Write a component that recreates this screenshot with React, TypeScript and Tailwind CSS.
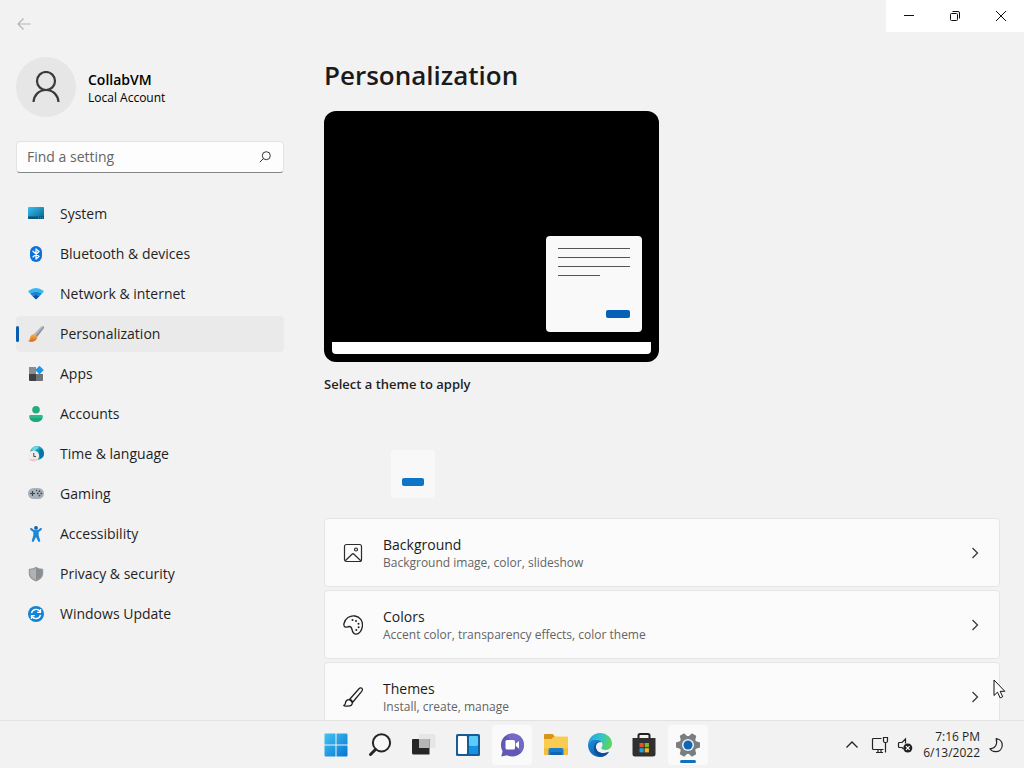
import React from 'react';

const SystemIcon = () => (
  <svg viewBox="0 0 16 16" className="size-4">
    <defs>
      <linearGradient id="sys" x1="0" y1="0" x2="1" y2="1">
        <stop offset="0" stopColor="#35c1f1" />
        <stop offset="1" stopColor="#0a5f8c" />
      </linearGradient>
    </defs>
    <rect y="1" width="16" height="12" rx="1" fill="url(#sys)" />
    <path d="M0 10.500h16V12a1 1 0 0 1-1 1H1a1 1 0 0 1-1-1z" fill="#0b5276" />
    <path d="M10 11.800h1m1 0h1m1 0h1" stroke="#35c1f1" strokeWidth="0.8" />
  </svg>
);

const BluetoothIcon = () => (
  <svg viewBox="0 0 16 16" className="size-4">
    <rect x="2" width="12" height="16" rx="6" fill="#0b72dc" />
    <path d="M5 5.200l6 5.400L8 13V3l3 2.500-6 5.400" fill="none" stroke="#fff" strokeWidth="1.300" strokeLinejoin="round" strokeLinecap="round" />
  </svg>
);

const NetworkIcon = () => (
  <svg viewBox="0 0 16 16" className="size-4">
    <path d="M.6 4.700Q8 -.8 15.400 4.700q.6.6.1 1.200L14 7.500Q8 4 2 7.500L.5 5.900Q0 5.300 .6 4.700z" fill="#35b8f0" />
    <path d="M2 7.500Q8 4 14 7.500l-2.400 2.500Q8 7.800 4.400 10z" fill="#1683d8" />
    <path d="M4.400 10Q8 7.800 11.600 10L8.600 13q-.6.5-1.200 0z" fill="#0a4fa8" />
  </svg>
);

const BrushIcon = () => (
  <svg viewBox="0 0 16 16" className="size-4">
    <defs>
      <linearGradient id="tip" x1="0" y1="0" x2="0" y2="1">
        <stop offset="0" stopColor="#f7b552" />
        <stop offset="1" stopColor="#d9651c" />
      </linearGradient>
    </defs>
    <path d="M15.600.4c.6.6.5 1.400 0 2.200L9.200 11 6 8.200 13.500.8c.7-.6 1.500-.9 2.100-.4z" fill="#8c919b" />
    <path d="M13.500.8c.7-.6 1.500-.9 2.100-.4L7.500 9.500 6 8.200z" fill="#b4b9c4" />
    <path d="M6 8l3.300 3c-.3 3-2.800 4.800-6 4.800-1.200 0-2.400-.2-3.100-.8 1.900-.8 1.500-2 2-3.700C2.700 9.300 4.200 8 6 8z" fill="url(#tip)" />
  </svg>
);

const AppsIcon = () => (
  <svg viewBox="0 0 16 16" className="size-4">
    <path d="M1 1h7v7H1z" fill="#8a8d8f" />
    <path d="M1 8h7v7H2a1 1 0 0 1-1-1z" fill="#3e4245" />
    <path d="M8 8h7v6a1 1 0 0 1-1 1H8z" fill="#6f7376" />
    <path d="M11.500-.2l4.300 4.300-4.300 4.300-4.300-4.300z" fill="#2196e3" />
  </svg>
);

const AccountsIcon = () => (
  <svg viewBox="0 0 16 16" className="size-4">
    <circle cx="8" cy="3.800" r="3.800" fill="#23ad7c" />
    <path d="M2.500 9h11c.8 0 1.300.6 1.300 1.300C14.800 14 11.500 16 8 16s-6.800-2-6.800-5.700C1.200 9.600 1.700 9 2.500 9z" fill="#2dba86" />
    <path d="M1.500 12C2.500 14.800 5 16 8 16s5.500-1.200 6.500-4z" fill="#20a583" />
  </svg>
);

const TimeIcon = () => (
  <svg viewBox="0 0 16 16" className="size-4">
    <circle cx="9" cy="7" r="7" fill="#149dbb" />
    <path d="M6 .8C8.500 0 10 .3 11 1.500 10 3 8 3 7 5L3 4z" fill="#75d5de" />
    <path d="M11 4l3-1c2 2.500 2.500 5 1 8l-3 2z" fill="#0874a4" />
    <circle cx="5.600" cy="9.900" r="5.500" fill="#f2eced" />
    <path d="M1 13a5.500 5.500 0 0 0 9.200 0z" fill="#efc8c9" />
    <path d="M5.800 7v3.600H8" fill="none" stroke="#404650" strokeWidth="1" />
  </svg>
);

const GamingIcon = () => (
  <svg viewBox="0 0 16 16" className="size-4">
    <rect y="2" width="16" height="11" rx="5.500" fill="#a9b2bb" />
    <path d="M4.500 5v5M2 7.500h5" stroke="#3e464f" strokeWidth="1.200" />
    <g fill="#3e464f">
      <circle cx="8.500" cy="4.500" r=".7" />
      <circle cx="11.500" cy="5.200" r=".9" />
      <circle cx="9.800" cy="7.400" r=".9" />
      <circle cx="13.300" cy="7.400" r=".9" />
      <circle cx="11.500" cy="9.600" r=".9" />
    </g>
  </svg>
);

const AccessibilityIcon = () => (
  <svg viewBox="0 0 16 16" className="size-4">
    <circle cx="8" cy="1.900" r="1.900" fill="#1261a6" />
    <path d="M2.200 2.500c.4-.7 1.200-.6 1.700-.2C5 3.500 6.400 4.200 8 4.200s3-.7 4.100-1.900c.5-.4 1.300-.5 1.700.2.300.6 0 1.100-.4 1.500L10.700 6v3.400l1.500 5.200c.2 1.300-1.500 1.900-2.100.6L8 11l-2.100 4.200c-.6 1.300-2.300.7-2.100-.6l1.500-5.200V6L2.600 4c-.4-.4-.7-.9-.4-1.500z" fill="#1c86d8" />
  </svg>
);

const ShieldIcon = () => (
  <svg viewBox="0 0 16 16" className="size-4">
    <path d="M8 .8c1.800 1.300 4 2 6.500 2 .4 0 .7.300.7.700V7.500c0 3.500-2.600 6.300-7.200 7.900C3.400 13.800.8 11 .8 7.500V3.500c0-.4.3-.7.700-.7C4 2.800 6.200 2.100 8 .8z" fill="#96999b" />
    <path d="M8 2.200c1.700 1 3.600 1.600 5.900 1.700v3.600C13.900 10.300 12 12.500 8 14z" fill="#898d8f" />
    <path d="M8 2.200C6.300 3.200 4.400 3.800 2.100 3.900v3.600c0 2.800 1.900 5 5.900 6.500z" fill="#b0b3b5" />
  </svg>
);

const UpdateIcon = () => (
  <svg viewBox="0 0 16 16" className="size-4">
    <circle cx="8" cy="8" r="8" fill="#1583d4" />
    <path d="M3.500 7.200A4.700 4.700 0 0 1 12 5.500M12.500 8.800A4.700 4.700 0 0 1 4 10.500" fill="none" stroke="#fff" strokeWidth="1.400" />
    <path d="M12.500 3v3.300H9.200M3.500 13V9.700h3.300" fill="none" stroke="#fff" strokeWidth="1.300" />
  </svg>
);

const PictureIcon = () => (
  <svg viewBox="0 0 20 20" className="size-5" fill="none" stroke="#2b2b2b" strokeWidth="1.200">
    <rect x="1.500" y="1.500" width="17" height="17" rx="2" />
    <path d="M2.200 17.800L9 11.200q1-.9 2 0l6.800 6.600" />
    <circle cx="13" cy="6.500" r="1.500" />
  </svg>
);

const PaletteIcon = () => (
  <svg viewBox="0 0 20 20" className="size-5">
    <path d="M1 8.500C2 3.500 7 .2 12 1c5 .9 8 5 7.400 10-.5 4.800-3.400 8.300-6.400 8.200-2.500-.1-3.500-2.200-4-4.700-.4-2-1.100-3.200-3-3-1.500.3-2.600 1-3.800.6C1.100 11.700.7 10 1 8.500z" fill="none" stroke="#222" strokeWidth="1.300" />
    <g fill="#222">
      <circle cx="9.500" cy="5" r="1" />
      <circle cx="13" cy="6" r="1" />
      <circle cx="15.500" cy="8.700" r="1" />
      <circle cx="15.600" cy="12.200" r="1" />
      <circle cx="13.300" cy="15" r="1" />
    </g>
  </svg>
);

const PaintbrushIcon = () => (
  <svg viewBox="0 0 20 20" className="size-5" fill="none" stroke="#222" strokeWidth="1.300" strokeLinejoin="round">
    <path d="M6.500 12.500L16 1.800c1-1 2.400-1.100 3-.4.700.7.400 1.900-.3 3L9.500 15.500z" />
    <path d="M6.500 12.600c1.800.2 2.900 1.300 2.900 3 0 2.200-2 3.600-4.600 3.600-1.600 0-3.300-.2-4-.8 1.400-.5 1.500-1.400 1.700-2.700.3-2 1.900-3.300 4-3.100z" />
  </svg>
);

const StartIcon = () => (
  <svg viewBox="0 0 24 24" className="size-6">
    <defs>
      <linearGradient id="start" gradientUnits="userSpaceOnUse" x1="0" y1="0" x2="24" y2="24">
        <stop offset="0" stopColor="#45c5f5" />
        <stop offset="1" stopColor="#0573d0" />
      </linearGradient>
    </defs>
    <path d="M1.500.5h10v11H.5v-10a1 1 0 0 1 1-1zm11 0h10a1 1 0 0 1 1 1v10h-11zM.5 12.500h11v11h-10a1 1 0 0 1-1-1zm12 0h11v10a1 1 0 0 1-1 1h-10z" fill="url(#start)" />
  </svg>
);

const TaskbarSearchIcon = () => (
  <svg viewBox="0 0 24 24" className="size-6" fill="none" stroke="#252525">
    <circle cx="13.500" cy="9.800" r="8.600" fill="#f8f8f8" strokeWidth="2" />
    <path d="M7.500 16.500l-5 5" strokeWidth="3" strokeLinecap="round" />
  </svg>
);

const TaskViewIcon = () => (
  <svg viewBox="0 0 24 24" className="size-6">
    <path d="M7 1h15a1.500 1.500 0 0 1 1.500 1.500V15H7z" fill="#e6e6e6" />
    <path d="M1 6h16.500v15.500H1.500A1.500 1.500 0 0 1 0 20V7a1 1 0 0 1 1-1z" fill="#262626" />
    <path d="M7 6h10.500v9H7z" fill="#b5b5b5" />
  </svg>
);

const WidgetsIcon = () => (
  <svg viewBox="0 0 24 24" className="size-6">
    <rect y="1" width="24" height="22" rx="1.500" fill="#175c94" />
    <rect x="2" y="3" width="9" height="18" rx="1" fill="#fff" />
    <rect x="13" y="3" width="9" height="10" rx="1" fill="#5bcbfb" />
    <rect x="13" y="13" width="9" height="8" rx="1" fill="#1592e6" />
  </svg>
);

const ChatIcon = () => (
  <svg viewBox="0 0 24 24" className="size-6">
    <path d="M12.500.5C19 .5 24 5.500 24 12s-5 11.500-11.500 11.500c-2 0-3.800-.4-5.300-1.300L1.300 23.500l1.300-5.300C1.500 16.400 1 14.300 1 12 1 5.500 6 .5 12.500.5z" fill="#6157b5" />
    <path d="M12.500.5C19 .5 24 5.500 24 12c0 3-1 5.600-2.800 7.600L6 2.500C8 1.200 10 .5 12.500.5z" fill="#7770ca" opacity=".7" />
    <rect x="5.500" y="7" width="9.500" height="9.500" rx="1.500" fill="#fff" />
    <path d="M15.800 10.500L19 8v7.500l-3.200-2.500z" fill="#fff" />
  </svg>
);

const ExplorerIcon = () => (
  <svg viewBox="0 0 24 24" className="size-6">
    <path d="M1 1h7.500l2.500 2.500V9H0V2a1 1 0 0 1 1-1z" fill="#d69518" />
    <path d="M0 6h7.500L10 3.500h13a1 1 0 0 1 1 1V21a1 1 0 0 1-1 1H1a1 1 0 0 1-1-1z" fill="#f8cc50" />
    <path d="M0 15h24v6a1 1 0 0 1-1 1H1a1 1 0 0 1-1-1z" fill="#f3be3e" />
    <path d="M6.500 15h11a2 2 0 0 1 2 2v5h-15v-5a2 2 0 0 1 2-2z" fill="#187dcc" />
    <path d="M6.500 19h11v3h-11z" fill="#1266b0" />
  </svg>
);

const EdgeIcon = () => (
  <svg viewBox="0 0 24 24" className="size-6">
    <defs>
      <linearGradient id="edge-top" x1="0" y1="0.300" x2="1" y2="0.500">
        <stop offset="0" stopColor="#22a5e0" />
        <stop offset="0.500" stopColor="#32c3cb" />
        <stop offset="1" stopColor="#61d555" />
      </linearGradient>
      <linearGradient id="edge-low" x1="0" y1="0" x2="1" y2="1">
        <stop offset="0" stopColor="#1d8fdd" />
        <stop offset="1" stopColor="#0b4a91" />
      </linearGradient>
    </defs>
    <path d="M0 11.500C.5 5 5.500 0 12 0c7 0 12 5 12 10.700 0 3.800-2.900 6.300-6.500 6.300-3 0-4.500-1.100-4.100-2.300.4-.8 1.100-1.200 1.100-2.900C14.500 9 11.500 6.500 8 6.500 4.500 6.500 1.500 8.500 0 11.500z" fill="url(#edge-top)" />
    <path d="M0 12c.7-3.300 4-5.500 8-5.500 2.300 0 4.500 1 5.600 2.600C9.300 9 7.300 12 8 15c.8 4.300 6 7 13 3.800C19 22 15.800 24 12 24 5 24 0 18.500 0 12z" fill="url(#edge-low)" />
    <path d="M8 15c-.6-2.500.8-5.300 3-6.200-2.500.2-5 2.700-5 6.200 0 4.500 3.300 8 7.500 8.900 3.200-.5 5.800-2.400 7.500-5.100-7 3.200-12.200.5-13-3.800z" fill="#0c4f9c" />
  </svg>
);

const StoreIcon = () => (
  <svg viewBox="0 0 24 24" className="size-6">
    <path d="M6.500 7V2.500A1.500 1.500 0 0 1 8 1h8a1.500 1.500 0 0 1 1.500 1.500V7" fill="none" stroke="#222" strokeWidth="2" />
    <path d="M.5 5h23v16a2.500 2.500 0 0 1-2.500 2.500H3A2.500 2.500 0 0 1 .5 21z" fill="#303030" />
    <path d="M7.500 10h4.200v4.200H7.500z" fill="#e9512b" />
    <path d="M12.700 10h4.200v4.200h-4.200z" fill="#7cb92b" />
    <path d="M7.500 15.200h4.200v4.200H7.500z" fill="#20a0e5" />
    <path d="M12.700 15.200h4.200v4.200h-4.200z" fill="#f5b71e" />
  </svg>
);

const SettingsIcon = () => (
  <svg viewBox="0 0 24 24" className="size-6">
    <g fill="#7a7e81">
      <circle cx="12" cy="12" r="9" />
      {[30, 90, 150, 210, 270, 330].map((angle) => (
        <path key={angle} d="M8 5L9.200.6q.1-.6.8-.6h4q.7 0 .8.600L16 5z" transform={`rotate(${angle} 12 12)`} />
      ))}
    </g>
    <circle cx="12" cy="12" r="6" fill="#eef2f5" />
    <circle cx="12" cy="12" r="4.500" fill="#0f66b5" />
  </svg>
);

const ChevronRight = () => (
  <svg viewBox="0 0 12 12" className="size-3" fill="none" stroke="#3a3a3a" strokeWidth="1.300">
    <path d="M3.500 1l5 5-5 5" />
  </svg>
);

const navItems = [
  { label: 'System', icon: SystemIcon },
  { label: 'Bluetooth & devices', icon: BluetoothIcon },
  { label: 'Network & internet', icon: NetworkIcon },
  { label: 'Personalization', icon: BrushIcon, active: true },
  { label: 'Apps', icon: AppsIcon },
  { label: 'Accounts', icon: AccountsIcon },
  { label: 'Time & language', icon: TimeIcon },
  { label: 'Gaming', icon: GamingIcon },
  { label: 'Accessibility', icon: AccessibilityIcon },
  { label: 'Privacy & security', icon: ShieldIcon },
  { label: 'Windows Update', icon: UpdateIcon },
];

const settings = [
  { title: 'Background', detail: 'Background image, color, slideshow', icon: PictureIcon },
  { title: 'Colors', detail: 'Accent color, transparency effects, color theme', icon: PaletteIcon },
  { title: 'Themes', detail: 'Install, create, manage', icon: PaintbrushIcon },
];

const taskbarApps = [
  { label: 'Start', icon: StartIcon },
  { label: 'Search', icon: TaskbarSearchIcon },
  { label: 'Task View', icon: TaskViewIcon },
  { label: 'Widgets', icon: WidgetsIcon },
  { label: 'Chat', icon: ChatIcon, hovered: true },
  { label: 'File Explorer', icon: ExplorerIcon },
  { label: 'Microsoft Edge', icon: EdgeIcon },
  { label: 'Microsoft Store', icon: StoreIcon },
  { label: 'Settings', icon: SettingsIcon, hovered: true, running: true },
];

const TitleBar = () => (
  <header className="flex h-12 shrink-0 items-start justify-between">
    <button aria-label="Back" className="flex h-12 w-12 items-center justify-center">
      <svg viewBox="0 0 14 14" className="size-3.5" fill="none" stroke="#b3b3b3" strokeWidth="1.200">
        <path d="M6.500 1.500L1 7l5.500 5.500M1 7h12.500" />
      </svg>
    </button>
    <div className="flex bg-white">
      <button aria-label="Minimize" className="flex h-8 w-[46px] items-center justify-center">
        <svg viewBox="0 0 12 12" className="size-3" stroke="#111">
          <path d="M1 5.500h10" />
        </svg>
      </button>
      <button aria-label="Restore" className="flex h-8 w-[46px] items-center justify-center">
        <svg viewBox="0 0 12 12" className="size-3" fill="none" stroke="#111">
          <rect x="1.500" y="3.500" width="7" height="7" rx="1" />
          <path d="M3.500 1.500H9A1.500 1.500 0 0 1 10.500 3v5.500" />
        </svg>
      </button>
      <button aria-label="Close" className="flex h-8 w-[46px] items-center justify-center">
        <svg viewBox="0 0 12 12" className="size-3" stroke="#111">
          <path d="M1 1l10 10M11 1L1 11" />
        </svg>
      </button>
    </div>
  </header>
);

const Sidebar = () => (
  <aside className="w-[268px] shrink-0 pt-[9px]">
    <div className="flex items-center gap-3">
      <div className="flex size-[60px] items-center justify-center rounded-full bg-[#e6e6e6]">
        <svg viewBox="0 0 32 32" className="size-8" fill="none" stroke="#3a3a3a" strokeWidth="2.200">
          <circle cx="16" cy="10" r="9" />
          <path d="M3.500 31C4 24 9 19 16 19s12 5 12.500 12" />
        </svg>
      </div>
      <div className="pt-0.5">
        <div className="text-sm/5 font-semibold text-black">CollabVM</div>
        <div className="text-xs/4 text-black">Local Account</div>
      </div>
    </div>
    <div className="mt-6 flex h-8 items-center rounded border border-[#e3e3e3] border-b-[#868686] bg-[#fdfdfd] pr-3 pl-2.5">
      <input
        type="text"
        aria-label="Find a setting"
        placeholder="Find a setting"
        className="min-w-0 flex-1 bg-transparent text-sm outline-none placeholder:text-[#666]"
      />
      <svg viewBox="0 0 12 12" className="size-3" fill="none" stroke="#333">
        <circle cx="7.300" cy="4.700" r="4" />
        <path d="M4.400 7.600L.8 11.200" />
      </svg>
    </div>
    <nav className="mt-[23px] flex flex-col gap-1">
      {navItems.map(({ label, icon: Icon, active }) => (
        <a
          key={label}
          href="#"
          className={`flex h-9 items-center rounded text-sm text-[#1f1f1f] ${active ? 'bg-[#eaeaea]' : ''}`}
        >
          <span className={`mr-[9px] h-4 w-[3px] rounded-full ${active ? 'bg-[#0a5cad]' : ''}`} />
          <Icon />
          <span className="ml-4">{label}</span>
        </a>
      ))}
    </nav>
  </aside>
);

const DesktopPreview = () => (
  <div className="mt-[18px] flex h-[251px] w-[335px] flex-col justify-end rounded-xl bg-black p-2">
    <div className="mr-[9px] mb-2.5 flex size-24 flex-col gap-2 self-end rounded-sm bg-[#f9f9f9] px-3 pt-3 pb-3.5">
      <div className="h-px bg-[#555]" />
      <div className="h-px bg-[#555]" />
      <div className="h-px bg-[#555]" />
      <div className="h-px w-[42px] bg-[#555]" />
      <div className="mt-auto h-2 w-6 self-end rounded-xs bg-[#0560b8]" />
    </div>
    <div className="h-3 rounded-b bg-white" />
  </div>
);

const Content = () => (
  <main className="min-w-0 flex-1 pt-[9px]">
    <h1 className="text-[26px]/9 font-semibold text-[#1a1a1a]">Personalization</h1>
    <DesktopPreview />
    <h2 className="mt-3 text-[13px]/5 font-semibold text-[#1f1f1f]">Select a theme to apply</h2>
    <button aria-label="Apply theme" className="mt-14 ml-[67px] flex h-12 w-11 items-end justify-center rounded-sm bg-[#f8f8f8] pb-3">
      <span className="h-2 w-[22px] rounded-xs bg-[#0f73c6]" />
    </button>
    <div className="mt-5 flex flex-col gap-[3px]">
      {settings.map(({ title, detail, icon: Icon }) => (
        <button
          key={title}
          className="flex h-[69px] w-full items-center rounded border border-[#e5e5e5] bg-[#fbfbfb] pr-[18px] pl-[18px] text-left"
        >
          <Icon />
          <span className="ml-5 flex-1">
            <span className="block text-sm/5 text-[#1b1b1b]">{title}</span>
            <span className="block text-xs/4 text-[#646464]">{detail}</span>
          </span>
          <ChevronRight />
        </button>
      ))}
    </div>
  </main>
);

const Taskbar = () => (
  <footer className="grid h-12 shrink-0 grid-cols-[1fr_auto_1fr] items-center border-t border-[#e2e2e2] bg-[#f2f2f2]">
    <div />
    <div className="flex gap-1">
      {taskbarApps.map(({ label, icon: Icon, hovered, running }) => (
        <button
          key={label}
          aria-label={label}
          className={`relative flex size-10 items-center justify-center rounded ${hovered ? 'bg-[#fafafa]' : ''}`}
        >
          <Icon />
          {running && <span className="absolute bottom-0.5 h-[3px] w-4 rounded-full bg-[#1470bd]" />}
        </button>
      ))}
    </div>
    <div className="flex items-center justify-end pr-5 text-[#1f1f1f]">
      <button aria-label="Show hidden icons" className="mr-3">
        <svg viewBox="0 0 14 14" className="size-3.5" fill="none" stroke="#222" strokeWidth="1.300">
          <path d="M1.500 9.500L7 4l5.500 5.500" />
        </svg>
      </button>
      <button aria-label="Network" className="mr-2">
        <svg viewBox="0 0 18 18" className="size-[18px]" fill="none" stroke="#222" strokeWidth="1.200">
          <path d="M10.500 2.500h-8a1 1 0 0 0-1 1v9a1 1 0 0 0 1 1h10M5 16.500h7M7 13.500v3M10 13.500v3" />
          <path d="M12.500 1.500h4V5a1.500 1.500 0 0 1-1.500 1.500h-1A1.500 1.500 0 0 1 12.500 5zM14.500 6.500v10" />
        </svg>
      </button>
      <button aria-label="Volume muted" className="mr-2.5">
        <svg viewBox="0 0 16 16" className="size-4" fill="none" stroke="#222" strokeWidth="1.200">
          <path d="M5 10.500H2.500a1 1 0 0 1-1-1v-3a1 1 0 0 1 1-1H5L8.500 2v4.500M5 10.500l1.500 1.500" />
          <circle cx="10.800" cy="11" r="4.500" fill="#222" stroke="none" />
          <path d="M9 9.200l3.600 3.600M12.600 9.200L9 12.800" stroke="#fff" />
        </svg>
      </button>
      <button className="mr-2 text-right text-xs/4">
        <span className="block">7:16 PM</span>
        <span className="block">6/13/2022</span>
      </button>
      <button aria-label="Focus assist">
        <svg viewBox="0 0 16 16" className="size-4" fill="none" stroke="#222" strokeWidth="1.200" strokeLinejoin="round">
          <path d="M8.200 1.500C12 2.200 14.500 5 14.200 8.800 13.900 12.500 11 14.800 7.500 14.700c-2.400-.1-4.400-1-5.600-2.900C7 11.500 9.800 8 8.200 1.500z" />
        </svg>
      </button>
    </div>
  </footer>
);

const App = () => {
  return (
    <div className="relative flex h-screen flex-col overflow-hidden bg-[#f2f2f2] font-['Open_Sans','Noto_Sans',sans-serif]">
      <TitleBar />
      <div className="flex min-h-0 flex-1 gap-10 overflow-hidden pr-6 pl-4">
        <Sidebar />
        <Content />
      </div>
      <Taskbar />
      <svg viewBox="0 0 13 20" className="pointer-events-none absolute right-[18px] bottom-[69px] h-5 w-[13px]" aria-hidden="true">
        <path d="M1 1v15.500l3.500-3.300 2.700 5.700 2.500-1.200-2.600-5.400h4.700z" fill="#fff" stroke="#111" />
      </svg>
    </div>
  );
};

export default App;
